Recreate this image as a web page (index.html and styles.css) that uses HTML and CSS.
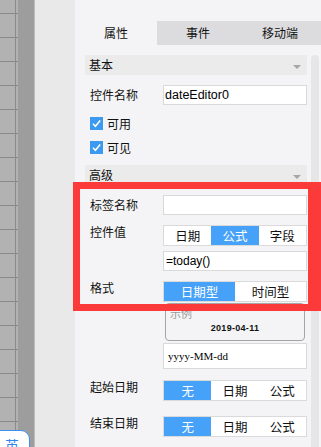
FILE: index.html
```html
<!DOCTYPE html>
<html lang="zh">
<head>
<meta charset="utf-8">
<link rel="stylesheet" href="styles.css">
</head>
<body>
<div class="canvas">
  <div class="grid"></div>
  <div class="dark"></div>
  <div class="edge"></div>
  <div class="gutter"></div>
</div>
<div class="panel">
  <div class="top-space"></div>
  <div class="tabs">
    <div class="tab active">属性</div>
    <div class="tab">事件</div>
    <div class="tab">移动端</div>
  </div>
  <div class="body">
    <div class="content">
      <div class="head h1"><span>基本</span><i class="tri"></i></div>
      <div class="row r-name">
        <div class="label">控件名称</div>
        <div class="field"><div class="input">dateEditor0</div></div>
      </div>
      <div class="check c1"><span class="box"><svg width="13" height="13" viewBox="0 0 13 13"><path d="M3 6.8 L5.4 9.2 L10.2 3.6" fill="none" stroke="#fff" stroke-width="1.6"/></svg></span>可用</div>
      <div class="check"><span class="box"><svg width="13" height="13" viewBox="0 0 13 13"><path d="M3 6.8 L5.4 9.2 L10.2 3.6" fill="none" stroke="#fff" stroke-width="1.6"/></svg></span>可见</div>
      <div class="head h2"><span>高级</span><i class="tri"></i></div>
      <div class="row r-tag">
        <div class="label">标签名称</div>
        <div class="field"><div class="input"></div></div>
      </div>
      <div class="row r-val">
        <div class="label top">控件值</div>
        <div class="field">
          <div class="seg three"><span>日期</span><span class="on">公式</span><span>字段</span></div>
          <div class="input formula">=today()</div>
        </div>
      </div>
      <div class="row r-fmt">
        <div class="label top">格式</div>
        <div class="field">
          <div class="seg two"><span class="on">日期型</span><span>时间型</span></div>
          <div class="example">
            <div class="ex-title">示例</div>
            <div class="ex-date">2019-04-11</div>
          </div>
          <div class="input pattern">yyyy-MM-dd</div>
        </div>
      </div>
      <div class="row r-start">
        <div class="label top">起始日期</div>
        <div class="field"><div class="seg three"><span class="on">无</span><span>日期</span><span>公式</span></div></div>
      </div>
      <div class="row r-end">
        <div class="label top">结束日期</div>
        <div class="field"><div class="seg three"><span class="on">无</span><span>日期</span><span>公式</span></div></div>
      </div>
    </div>
    <div class="scroll"></div>
  </div>
</div>
<div class="redframe"></div>
<div class="ime">英</div>
</body>
</html>
```
FILE: styles.css
```css
html, body {
  margin: 0;
  padding: 0;
}
body {
  width: 321px;
  height: 447px;
  overflow: hidden;
  display: flex;
  position: relative;
  font-family: "Liberation Sans", "Noto Sans CJK SC", sans-serif;
  font-size: 12px;
  color: #111;
  background: #f4f4f6;
}
.canvas {
  width: 75px;
  display: flex;
  flex-shrink: 0;
}
.grid {
  width: 18px;
  background-color: #b2b2b2;
  background-image:
    linear-gradient(to right, transparent 15px, #8a8a8a 15px, #8a8a8a 16px, transparent 16px),
    linear-gradient(to bottom, #8a8a8a 1px, transparent 1px);
  background-size: 100% 100%, 100% 24px;
  background-position: 0 0, 0 13px;
  background-repeat: no-repeat, repeat-y;
}
.dark {
  width: 16px;
  background: #9d9d9d;
}
.edge {
  width: 1px;
  background: #bdbdbd;
}
.gutter {
  width: 40px;
  background: #e9e9e9;
}
.panel {
  width: 246px;
  flex-shrink: 0;
  background: #f4f4f6;
  display: flex;
  flex-direction: column;
}
.top-space {
  height: 21px;
}
.tabs {
  display: flex;
  height: 24px;
}
.tab {
  width: 82px;
  background: #dcdcdf;
  text-align: center;
  line-height: 24px;
  font-family: "Noto Sans CJK SC", sans-serif;
}
.tab.active {
  background: #f4f4f6;
}
.body {
  flex: 1;
  display: flex;
  padding-left: 10px;
}
.content {
  width: 222px;
  display: flex;
  flex-direction: column;
}
.scroll {
  width: 8px;
  margin-left: 4px;
  margin-top: 10px;
  background: #e6e6e6;
  border-radius: 4px 4px 0 0;
}
.head {
  height: 20px;
  background: #ebebeb;
  display: flex;
  align-items: center;
  justify-content: space-between;
  padding: 0 6px 0 4px;
  font-family: "Noto Sans CJK SC", sans-serif;
  line-height: 20px;
}
.h1 { margin-top: 10px; }
.h2 { margin-top: 6px; }
.tri {
  width: 0;
  height: 0;
  border-left: 4px solid transparent;
  border-right: 4px solid transparent;
  border-top: 4px solid #a6a6a6;
  margin-top: 3px;
}
.row {
  display: grid;
  grid-template-columns: 78px 144px;
}
.label {
  padding-left: 5px;
  line-height: 20px;
  font-family: "Noto Sans CJK SC", sans-serif;
}
.label.top {
  line-height: 14px;
}
.field {
  display: flex;
  flex-direction: column;
}
.input {
  height: 20px;
  box-sizing: border-box;
  background: #fff;
  border: 1px solid #d9d9d9;
  padding-left: 1px;
  line-height: 18px;
  font-family: "Liberation Sans", sans-serif;
  font-size: 12.5px;
  color: #000;
}
.formula {
  margin-top: 5px;
  font-size: 12px;
  padding-left: 2px;
}
.pattern {
  margin-top: 2px;
  height: 26px;
  line-height: 24px;
  padding-left: 4px;
  font-family: "Liberation Serif", serif;
  font-size: 11px;
}
.r-name { margin-top: 10px; }
.r-tag { margin-top: 10px; }
.r-val { margin-top: 10px; }
.r-fmt { margin-top: 10px; }
.r-start { margin-top: 11px; }
.r-end { margin-top: 15px; }
.check {
  height: 24px;
  display: flex;
  align-items: center;
  padding-left: 5px;
  font-family: "Noto Sans CJK SC", sans-serif;
}
.c1 { margin-top: 6px; }
.box {
  width: 13px;
  height: 13px;
  background: #3b9af0;
  margin-right: 4px;
  display: flex;
}
.seg {
  height: 21px;
  box-sizing: border-box;
  border: 1px solid #dadada;
  background: #fff;
  display: grid;
  font-family: "Noto Sans CJK SC", sans-serif;
}
.seg.three { grid-template-columns: 1fr 1fr 1fr; }
.seg.two { grid-template-columns: 1fr 1fr; }
.seg span {
  text-align: center;
  line-height: 19px;
  font-size: 12.5px;
}
.seg span.on {
  background: #46a1f9;
  color: #fff;
}
.example {
  margin: 1px 2px 0;
  height: 38px;
  box-sizing: border-box;
  border: 1px solid #a5a5a5;
  border-radius: 4px;
  display: flex;
  flex-direction: column;
}
.ex-title {
  font-family: "Noto Sans CJK SC", sans-serif;
  font-size: 11px;
  line-height: 14px;
  color: #9a9a9a;
  padding: 2px 0 0 4px;
}
.ex-date {
  text-align: center;
  font-weight: bold;
  font-size: 9px;
  letter-spacing: 0.3px;
  line-height: 12px;
  margin-top: 2px;
  color: #111;
}
.redframe {
  position: absolute;
  left: 73px;
  top: 182px;
  width: 248px;
  height: 129px;
  box-sizing: border-box;
  border: 7px solid #fc3a3a;
  border-right-width: 13px;
}
.ime {
  position: absolute;
  left: -2px;
  top: 430px;
  width: 32px;
  height: 24px;
  box-sizing: border-box;
  background: #fff;
  border: 1.5px solid #3d8ff0;
  border-top-right-radius: 9px;
  padding: 7px 0 0 6px;
  font-family: "Noto Sans CJK SC", sans-serif;
  font-size: 14px;
  line-height: 14px;
  color: #2f86ee;
}
```
